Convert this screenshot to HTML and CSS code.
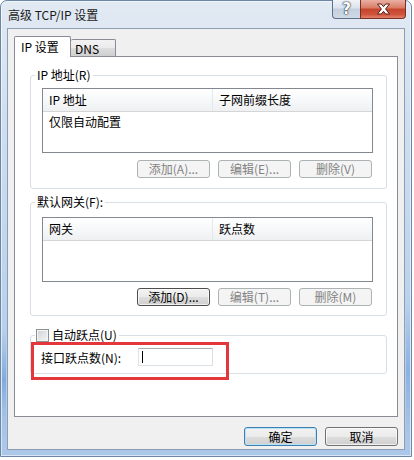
FILE: index.html
```html
<!DOCTYPE html>
<html lang="zh-CN">
<head>
  <meta charset="UTF-8" />
  <title>高级 TCP/IP 设置</title>
  <link rel="stylesheet" href="styles.css">
</head>
<body>

  <div class="window">
    <div class="titlebar">
      <span class="title">高级 TCP/IP 设置</span>
      <div class="caption-btns">
        <span class="cap-btn cap-help">?</span>
        <span class="cap-btn cap-close">
          <svg width="15" height="12" viewBox="0 0 15 12">
            <path d="M1.5 1 H5.3 L7.5 3.7 L9.7 1 H13.5 L9.6 6 L13.5 11 H9.7 L7.5 8.3 L5.3 11 H1.5 L5.4 6 Z" fill="#fff" stroke="#5a1d14" stroke-width="1" stroke-linejoin="round"/>
          </svg>
        </span>
      </div>
    </div>

    <div class="client">
      <div class="tabs">
        <span class="tab tab-active">IP 设置</span>
        <span class="tab tab-plain">DNS</span>
      </div>

      <div class="panel">
        <fieldset class="group group-ip">
          <legend>IP 地址(R)</legend>
          <div class="listview lv-ip">
            <div class="lv-head">
              <span class="lv-col first">IP 地址</span>
              <span class="lv-col">子网前缀长度</span>
            </div>
            <div class="lv-row">仅限自动配置</div>
          </div>
          <div class="btn-row">
            <button class="btn btn-disabled">添加(A)...</button>
            <button class="btn btn-disabled">编辑(E)...</button>
            <button class="btn btn-disabled">删除(V)</button>
          </div>
        </fieldset>

        <fieldset class="group group-gw">
          <legend>默认网关(F):</legend>
          <div class="listview lv-gw">
            <div class="lv-head">
              <span class="lv-col first">网关</span>
              <span class="lv-col">跃点数</span>
            </div>
          </div>
          <div class="btn-row">
            <button class="btn btn-focus">添加(D)...</button>
            <button class="btn btn-disabled">编辑(T)...</button>
            <button class="btn btn-disabled">删除(M)</button>
          </div>
        </fieldset>

        <fieldset class="group group-metric">
          <legend><span class="checkbox"></span>自动跃点(U)</legend>
          <div class="metric-row">
            <span class="metric-label">接口跃点数(N):</span>
            <span class="textbox"><span class="caret"></span></span>
          </div>
        </fieldset>

        <div class="highlight"></div>
      </div>

      <div class="actions">
        <button class="btn btn-big btn-default">确定</button>
        <button class="btn btn-big">取消</button>
      </div>
    </div>
  </div>

</body>
</html>
```

FILE: styles.css
```css
body {
  margin: 0;
  width: 414px;
  height: 460px;
  overflow: hidden;
  background: #ffffff;
  font-family: "Noto Sans CJK SC", "Noto Sans", sans-serif;
  font-size: 12px;
  color: #000;
}

.window {
  width: 412px;
  height: 457px;
  box-sizing: border-box;
  border: 1px solid #6c87a6;
  border-radius: 7px 7px 0 0;
  padding: 0 6px 6px;
  background:
    linear-gradient(to bottom, transparent 0%, rgba(90, 145, 210, 0.55) 45%, rgba(90, 145, 210, 0.2) 70%, transparent 100%) left 1px top 330px / 4px 110px no-repeat,
    linear-gradient(to bottom, transparent 0%, rgba(90, 145, 210, 0.45) 50%, transparent 100%) right 1px top 300px / 4px 140px no-repeat,
    linear-gradient(to bottom, #e2eaf3 0%, #d0dff0 25%, #bdd4ed 60%, #aac6e8 100%);
  box-shadow: inset 0 0 0 1px rgba(255, 255, 255, 0.55);
}

.titlebar {
  height: 27px;
  display: flex;
  align-items: flex-start;
}

.title {
  padding: 6px 0 0 1px;
  line-height: 16px;
  color: #1a1a1a;
}

.caption-btns {
  display: flex;
  margin: -1px -1px 0 auto;
}

.cap-btn {
  height: 19px;
  box-sizing: border-box;
  display: flex;
  align-items: center;
  justify-content: center;
  border: 1px solid #5f7189;
  border-top: none;
}

.cap-help {
  width: 28px;
  border-right: none;
  border-radius: 0 0 0 4px;
  background: linear-gradient(to bottom, #f1f4f8 0%, #dbe3ec 45%, #c3cfdc 50%, #cfdae6 100%);
  color: #fff;
  font-family: "DejaVu Sans", sans-serif;
  font-weight: bold;
  font-size: 15px;
  line-height: 17px;
  text-shadow: 0 0 1px #2c3a4c, 0 0 1px #2c3a4c, 0 0 2px #2c3a4c;
}

.cap-close {
  width: 46px;
  border-color: #7d2e24;
  border-radius: 0 0 4px 0;
  background: linear-gradient(to bottom, #eab0a3 0%, #d97a64 45%, #c5432c 50%, #cf553c 80%, #e08269 100%);
}

.client {
  height: 422px;
  box-sizing: border-box;
  border: 1px solid #8d9db2;
  background: #f0f0f0;
  display: flex;
  flex-direction: column;
}

.tabs {
  display: flex;
  align-items: flex-end;
  margin: 7px 0 -1px 6px;
  position: relative;
  z-index: 1;
}

.tab {
  box-sizing: border-box;
  border: 1px solid #898c95;
  border-bottom: none;
  border-radius: 2px 2px 0 0;
  line-height: 15px;
}

.tab-active {
  width: 57px;
  height: 21px;
  padding: 2px 0 0 6px;
  background: #ffffff;
}

.tab-plain {
  width: 45px;
  height: 17px;
  margin-bottom: 1px;
  border-left: none;
  padding: 1px 0 0 4px;
  background: linear-gradient(to bottom, #f2f2f2 0%, #ebebeb 50%, #dddddd 51%, #cfcfcf 100%);
}

.panel {
  position: relative;
  height: 361px;
  box-sizing: border-box;
  margin: 0 6px;
  padding-left: 15px;
  border: 1px solid #898c95;
  background: #ffffff;
}

.group {
  width: 357px;
  box-sizing: border-box;
  min-inline-size: 0;
  margin: 0;
  padding: 0;
  border: 1px solid #d5dfe5;
  border-radius: 3px;
}

.group legend {
  margin-left: 4px;
  padding: 0 2px;
  line-height: 14px;
  display: flex;
  align-items: center;
}

.group-ip {
  margin-top: 11px;
}

.group-gw {
  margin-top: 6px;
}

.group-metric {
  margin-top: 12px;
}

.listview {
  width: 331px;
  height: 65px;
  box-sizing: border-box;
  margin-left: 11px;
  border: 1px solid #828790;
  background: #ffffff;
}

.lv-ip {
  margin-top: 6px;
}

.lv-gw {
  margin-top: 8px;
}

.lv-head {
  display: flex;
  height: 23px;
  box-sizing: border-box;
  border-bottom: 1px solid #d5d5d5;
  background: linear-gradient(to bottom, #ffffff 0%, #f7f8f9 50%, #eef0f2 100%);
}

.lv-col {
  padding-left: 6px;
  line-height: 22px;
}

.lv-col.first {
  width: 163px;
  border-right: 1px solid #e3e8ee;
}

.lv-row {
  padding-left: 6px;
  line-height: 19px;
}

.btn-row {
  display: flex;
  justify-content: flex-end;
  gap: 8px;
  padding-right: 14px;
}

.group-ip .btn-row {
  margin: 7px 0 10px;
}

.group-gw .btn-row {
  margin: 6px 0 9px;
}

.btn {
  width: 73px;
  height: 18px;
  box-sizing: border-box;
  padding: 0;
  border: 1px solid #707070;
  border-radius: 3px;
  background: linear-gradient(to bottom, #f2f2f2 0%, #ebebeb 50%, #dddddd 51%, #cfcfcf 100%);
  box-shadow: inset 0 0 0 1px rgba(255, 255, 255, 0.7);
  font: inherit;
  line-height: 16px;
  color: #000;
  text-align: center;
}

.btn-disabled {
  border-color: #adb2b5;
  background: #f4f4f4;
  box-shadow: none;
  color: #838383;
}

.btn-focus {
  border-color: #4d4d4d;
}

.btn-big {
  height: 19px;
  line-height: 17px;
}

.btn-default {
  border-color: #3c7fb1;
  box-shadow: inset 0 0 0 1px #b9e1f7;
}

.checkbox {
  width: 13px;
  height: 13px;
  box-sizing: border-box;
  margin: 0 3px 0 -1px;
  border: 1px solid #8e8f8f;
  background: linear-gradient(135deg, #cfd2d6 0%, #e6e7e9 60%, #f4f4f4 100%);
  box-shadow: inset 0 0 0 1px #f4f4f4;
}

.metric-row {
  display: flex;
  align-items: center;
  margin: 6px 0 7px;
  padding-left: 10px;
}

.metric-label {
  width: 97px;
}

.textbox {
  width: 75px;
  height: 18px;
  box-sizing: border-box;
  display: flex;
  align-items: center;
  padding-left: 3px;
  border: 1px solid #dbdfe6;
  border-top-color: #abadb3;
  border-left-color: #e2e3ea;
  background: #ffffff;
}

.caret {
  width: 1px;
  height: 12px;
  background: #000;
}

.highlight {
  position: absolute;
  left: 16px;
  top: 285px;
  width: 198px;
  height: 38px;
  box-sizing: border-box;
  border: 3px solid #e3373b;
}

.actions {
  display: flex;
  justify-content: flex-end;
  gap: 8px;
  margin: 10px 6px 0 0;
}
```
